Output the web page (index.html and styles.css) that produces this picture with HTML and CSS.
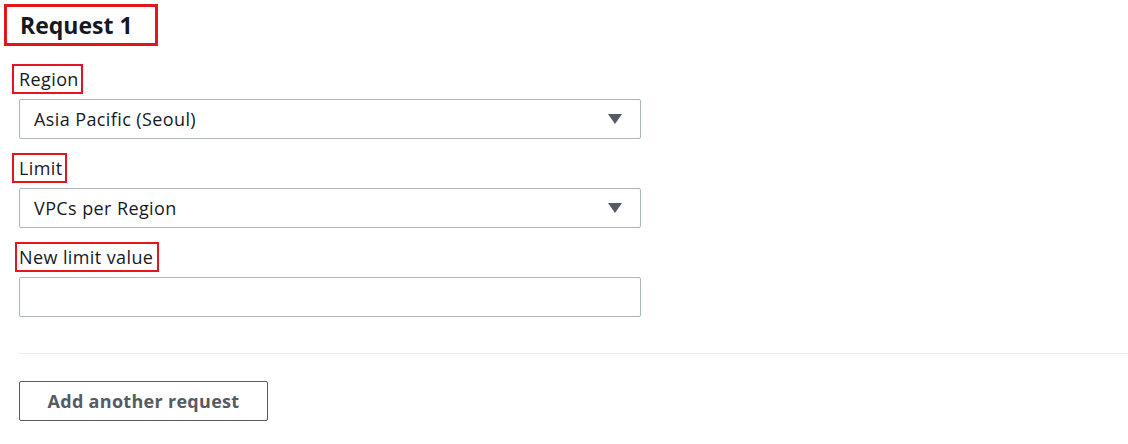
FILE: index.html
```html
<!DOCTYPE html>
<html>
<head>
<meta charset="utf-8">
<link rel="stylesheet" href="styles.css">
</head>
<body>
<div class="request">
  <h2 class="title">Request 1</h2>
  <div class="field">
    <span class="label label-wide">Region</span>
    <div class="control select">
      <span class="value">Asia Pacific (Seoul)</span>
      <svg class="caret" width="14" height="10" viewBox="0 0 14 10"><path d="M0 0 H14 L7 10 Z" fill="#545b64"/></svg>
    </div>
  </div>
  <div class="field">
    <span class="label label-wide">Limit</span>
    <div class="control select">
      <span class="value">VPCs per Region</span>
      <svg class="caret" width="14" height="10" viewBox="0 0 14 10"><path d="M0 0 H14 L7 10 Z" fill="#545b64"/></svg>
    </div>
  </div>
  <div class="field">
    <span class="label label-narrow">New limit value</span>
    <div class="control input"></div>
  </div>
  <div class="divider"></div>
  <button class="btn">Add another request</button>
</div>
</body>
</html>
```
FILE: styles.css
```css
html, body {
  margin: 0;
  padding: 0;
  background: #ffffff;
}
body {
  font-family: "Open Sans", "Liberation Sans", sans-serif;
  color: #16191f;
}
.request {
  display: flex;
  flex-direction: column;
  align-items: flex-start;
  padding-top: 4px;
}
.title {
  box-sizing: border-box;
  margin: 0 0 0 4px;
  height: 42px;
  width: 154px;
  border: 3px solid #e3161f;
  padding: 0 0 0 13px;
  font-size: 23px;
  font-weight: 700;
  line-height: 36px;
  color: #16191f;
}
.field {
  display: flex;
  flex-direction: column;
  align-items: flex-start;
  margin-top: 14px;
  width: 100%;
}
.request .field:first-of-type {
  margin-top: 18px;
}
.label {
  box-sizing: border-box;
  height: 30px;
  border: 2px solid #e3161f;
  font-size: 18px;
  line-height: 26px;
  letter-spacing: 0.4px;
  color: #16191f;
}
.label-wide {
  margin-left: 12px;
  padding: 0 2px 0 5px;
}
.label-narrow {
  margin-left: 15px;
  padding: 0 4px 0 2px;
}
.control {
  box-sizing: border-box;
  margin: 5px 0 0 19px;
  width: 622px;
  height: 40px;
  border: 1px solid #aab7b8;
  border-radius: 2px;
  background: #fff;
}
.select {
  display: flex;
  align-items: center;
  justify-content: space-between;
  padding: 0 18px 0 14px;
}
.value {
  font-size: 18px;
  letter-spacing: 0.4px;
  color: #16191f;
}
.caret {
  display: block;
}
.divider {
  margin: 36px 0 0 19px;
  width: calc(100% - 19px);
  height: 1px;
  background: #eaeded;
}
.btn {
  box-sizing: border-box;
  margin: 27px 0 0 19px;
  width: 249px;
  height: 40px;
  border: 1px solid #545b64;
  border-radius: 2px;
  background: #fff;
  font-family: "Open Sans", "Liberation Sans", sans-serif;
  font-size: 18px;
  font-weight: 700;
  letter-spacing: 0.3px;
  color: #545b64;
  padding: 0;
}
```
